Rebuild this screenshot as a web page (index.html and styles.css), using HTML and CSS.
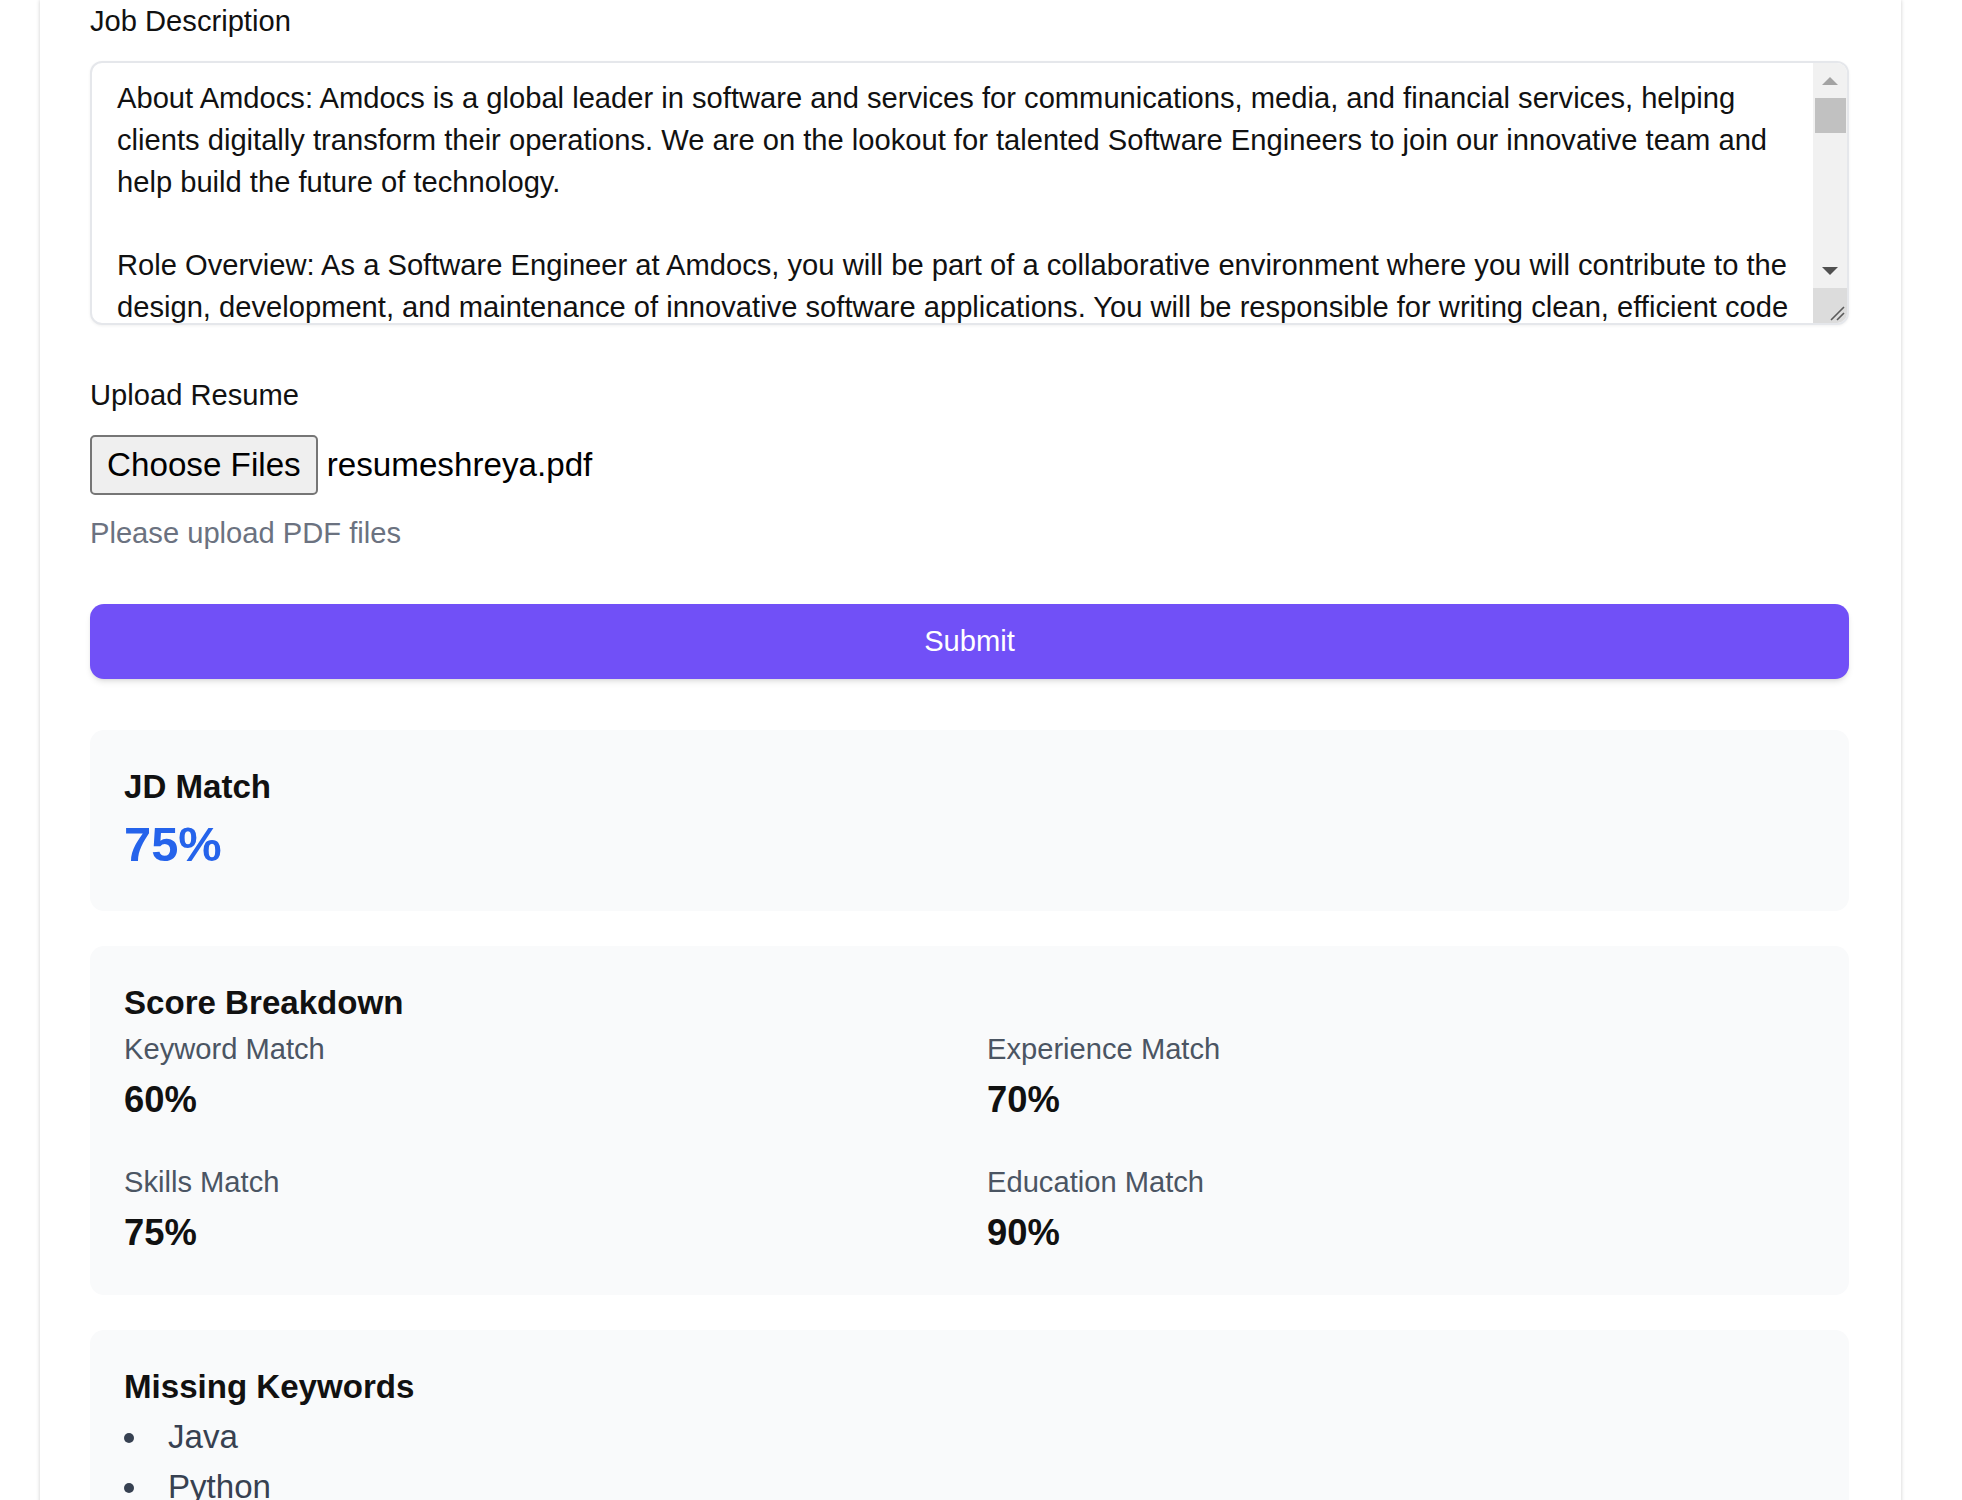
FILE: index.html
```html
<!DOCTYPE html>
<html lang="en">
<head>
<meta charset="utf-8">
<title>Resume Analyzer</title>
<link rel="stylesheet" href="styles.css">
</head>
<body>
<main class="panel">
  <div class="field">
    <label class="label" for="jd">Job Description</label>
    <div class="jd-wrap">
      <textarea id="jd" class="jd" readonly>About Amdocs: Amdocs is a global leader in software and services for communications, media, and financial services, helping clients digitally transform their operations. We are on the lookout for talented Software Engineers to join our innovative team and help build the future of technology.

Role Overview: As a Software Engineer at Amdocs, you will be part of a collaborative environment where you will contribute to the design, development, and maintenance of innovative software applications. You will be responsible for writing clean, efficient code and collaborating with cross-functional teams to deliver high-quality solutions.</textarea>
      <div class="sb" aria-hidden="true">
        <div class="sb-btn"><span class="tri-up"></span></div>
        <div class="sb-thumb"></div>
        <div class="sb-space"></div>
        <div class="sb-btn"><span class="tri-down"></span></div>
        <div class="sb-corner">
          <svg width="16" height="16" viewBox="0 0 16 16"><path d="M15 2 L2 15 M15 8 L8 15" stroke="#5a5a5a" stroke-width="1.6" fill="none"/></svg>
        </div>
      </div>
    </div>
  </div>

  <div class="field upload">
    <label class="label label-upload">Upload Resume</label>
    <div class="file-row">
      <button class="file-btn" type="button">Choose Files</button>
      <span class="file-name">resumeshreya.pdf</span>
    </div>
    <p class="hint">Please upload PDF files</p>
  </div>

  <button class="submit" type="button">Submit</button>

  <section class="card card-first">
    <h2 class="card-title">JD Match</h2>
    <div class="big">75%</div>
  </section>

  <section class="card card-score">
    <h2 class="card-title">Score Breakdown</h2>
    <div class="grid">
      <div class="metric"><div class="m-label">Keyword Match</div><div class="m-value">60%</div></div>
      <div class="metric"><div class="m-label">Experience Match</div><div class="m-value">70%</div></div>
      <div class="metric"><div class="m-label">Skills Match</div><div class="m-value">75%</div></div>
      <div class="metric"><div class="m-label">Education Match</div><div class="m-value">90%</div></div>
    </div>
  </section>

  <section class="card">
    <h2 class="card-title">Missing Keywords</h2>
    <ul class="kw">
      <li>Java</li>
      <li>Python</li>
      <li>Cloud Technologies</li>
      <li>Agile Methodologies</li>
    </ul>
  </section>
</main>
</body>
</html>
```

FILE: styles.css
```css
html, body {
  margin: 0;
  padding: 0;
  background: #ffffff;
  overflow: hidden;
}

body {
  font-family: "Liberation Sans", Arial, sans-serif;
  color: #111111;
}

.panel {
  box-sizing: border-box;
  margin-left: 40px;
  width: 1861px;
  min-height: 1700px;
  padding: 0 52px 0 50px;
  background: #ffffff;
  box-shadow: 0 0 4px rgba(0, 0, 0, 0.2);
}

.label {
  display: block;
  font-size: 29.15px;
  line-height: 43px;
  color: #111111;
  margin: 0 0 18px;
}

.label-upload {
  margin-bottom: 17.75px;
}

.jd-wrap {
  position: relative;
  height: 264px;
}

.jd {
  display: block;
  box-sizing: border-box;
  width: 100%;
  height: 264px;
  margin: 0;
  border: 2px solid #e5e7eb;
  border-radius: 12px;
  padding: 15px 52px 12px 25px;
  font-family: "Liberation Sans", Arial, sans-serif;
  font-size: 29.15px;
  line-height: 41.8px;
  color: #111111;
  background: #ffffff;
  resize: none;
  overflow: hidden;
  outline: none;
  box-shadow: 0 1px 3px rgba(0, 0, 0, 0.06);
}

.sb {
  position: absolute;
  top: 2px;
  right: 2px;
  bottom: 2px;
  width: 34px;
  background: #f1f1f1;
  border-radius: 0 10px 10px 0;
  overflow: hidden;
  display: flex;
  flex-direction: column;
}

.sb-btn {
  height: 35px;
  flex: none;
  display: flex;
  align-items: center;
  justify-content: center;
}

.tri-up {
  width: 0;
  height: 0;
  border-left: 8.5px solid transparent;
  border-right: 8.5px solid transparent;
  border-bottom: 8px solid #a3a3a3;
}

.tri-down {
  width: 0;
  height: 0;
  border-left: 8.5px solid transparent;
  border-right: 8.5px solid transparent;
  border-top: 8px solid #505050;
}

.sb-thumb {
  flex: none;
  height: 35px;
  margin: 0 1px 0 2px;
  background: #c1c1c1;
}

.sb-space {
  flex: 1;
}

.sb-corner {
  flex: none;
  height: 35px;
  background: #dcdcdc;
  display: flex;
  align-items: flex-end;
  justify-content: flex-end;
  padding: 0 2px 2px 0;
  box-sizing: border-box;
}

.upload {
  margin-top: 48.75px;
}

.file-row {
  display: flex;
  align-items: center;
  gap: 9px;
}

.file-btn {
  box-sizing: border-box;
  height: 60px;
  padding: 0 15px;
  margin: 0;
  font-family: "Liberation Sans", Arial, sans-serif;
  font-size: 33.2px;
  color: #000000;
  background: #efefef;
  border: 2px solid #767676;
  border-radius: 5px;
}

.file-name {
  font-size: 33.2px;
  color: #000000;
}

.hint {
  margin: 17px 0 0;
  font-size: 29.15px;
  line-height: 43px;
  color: #6b7280;
}

.submit {
  display: block;
  width: 100%;
  height: 75px;
  margin-top: 49px;
  border: none;
  border-radius: 14px;
  background: #7150f7;
  color: #ffffff;
  font-family: "Liberation Sans", Arial, sans-serif;
  font-size: 29.15px;
  box-shadow: 0 4px 6px -1px rgba(0, 0, 0, 0.1), 0 2px 4px -2px rgba(0, 0, 0, 0.1);
}

.card {
  background: #f9fafb;
  border-radius: 14px;
  padding: 32px 34px;
  margin-top: 35px;
}

.card-first {
  margin-top: 51px;
  padding-bottom: 34.5px;
}

.card-score {
  padding-bottom: 37px;
}

.card-title {
  margin: 0;
  font-size: 33.1px;
  line-height: 50px;
  font-weight: bold;
  color: #111111;
}

.big {
  font-size: 48.8px;
  line-height: 64.5px;
  font-weight: bold;
  color: #2563eb;
}

.grid {
  display: grid;
  grid-template-columns: 1fr 1fr;
  column-gap: 35px;
  row-gap: 36px;
}

.m-label {
  font-size: 29.15px;
  line-height: 43px;
  color: #4b5563;
}

.m-value {
  margin-top: 4px;
  font-size: 36.4px;
  line-height: 50px;
  font-weight: bold;
  color: #111111;
}

.kw {
  list-style: none;
  margin: 0;
  padding: 0;
}

.kw li {
  display: flex;
  align-items: center;
  font-size: 33.1px;
  line-height: 50px;
  color: #374151;
}

.kw li::before {
  content: "";
  flex: none;
  width: 10px;
  height: 10px;
  margin-top: 3px;
  margin-right: 34px;
  border-radius: 50%;
  background: #374151;
}
```
